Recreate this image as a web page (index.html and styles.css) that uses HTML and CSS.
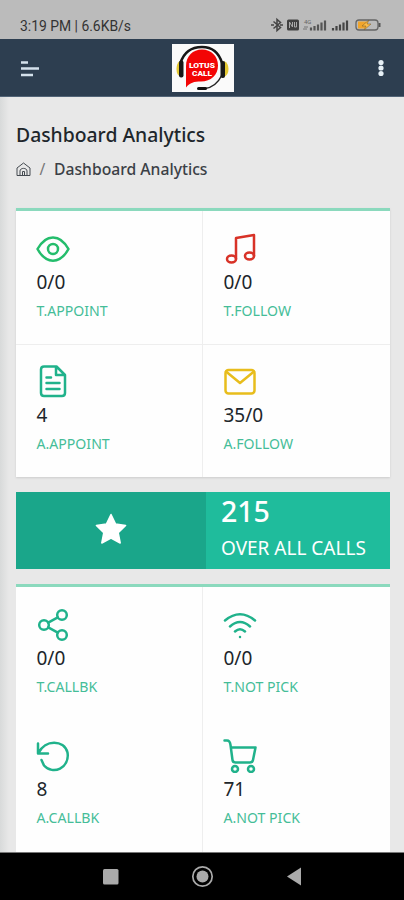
FILE: index.html
```html
<!DOCTYPE html>
<html lang="en">
<head>
<meta charset="utf-8">
<title>Dashboard Analytics</title>
<link rel="stylesheet" href="styles.css">
</head>
<body>
<div class="status">
  <span class="clock">3:19 PM | 6.6KB/s</span>
  <svg class="status-icons" width="112" height="16" viewBox="0 0 112 16">
    <g fill="none" stroke="#444" stroke-width="1.500"><path d="M3.500 4.500l7 6-3.500 3v-11l3.500 3-7 6"/><path d="M1 8h3M10 8h3"/></g>
    <rect x="17" y="2.500" width="12" height="11" rx="1.500" fill="#414141"/>
    <path d="M19.500 11V5l3 5V5m2 0v5h2V5" fill="none" stroke="#aaa" stroke-width="1"/>
    <text class="net" x="34" y="6.500">4G</text>
    <path d="M34 10h4M33 12h4" stroke="#777"/>
    <path d="M41 13.500v-3M44.500 13.500v-4.500M48 13.500v-6M51.500 13.500v-8M55 13.500v-10" stroke="#555" stroke-width="2.200"/>
    <path d="M63 13.500v-2.500M66.500 13.500v-4.500M70 13.500v-6M73.500 13.500v-8M77 13.500v-10" stroke="#444" stroke-width="2.200"/>
    <rect x="86" y="3" width="22" height="10" rx="3" fill="#bbb" stroke="#666" stroke-width="1.300"/>
    <path d="M88 4.500h10l-2 7h-8z" fill="#f1a52b"/><path d="M99 3l-7 6h4l-2 4 7-6h-4z" fill="#ffbd45" stroke="#775b2d" stroke-width=".5"/>
    <path d="M109.500 6v4" stroke="#555" stroke-width="2"/>
  </svg>
</div>
<header class="topbar">
  <svg width="20" height="20" viewBox="0 0 20 20"><path d="M1 4.500h7M1 10.500h18M1 17h12" stroke="#d4e1ec" stroke-width="2.600"/></svg>
  <svg class="logo" width="62" height="48" viewBox="0 0 62 48">
    <rect width="62" height="48" fill="#fafafa"/>
    <path d="M8.500 19C12 8 20 3 30 3S47 9 50 19" fill="none" stroke="#171717" stroke-width="2.600"/>
    <path d="M50 31C46 39 41 43.500 33 44.500" fill="none" stroke="#222" stroke-width="1.500"/>
    <path d="M8 17Q4.500 19 4.500 25T8 32z" fill="#e4c832"/><path d="M52 17q4.500 2 4.500 8T52 33z" fill="#e4c832"/>
    <rect x="7" y="16.500" width="4.500" height="17" rx="2" fill="#181818"/><rect x="48.500" y="17" width="4.500" height="17" rx="2" fill="#181818"/>
    <path d="M14 43.500V22C14 12 21 5.500 30 5.500S46 12 46 21.500 39 37.500 29 37.500c-7 0-11 1-15 6z" fill="#f30505"/>
    <rect x="25" y="43" width="10" height="3" rx="1.500" fill="#111"/>
    <text x="30" y="24" text-anchor="middle" textLength="26" lengthAdjust="spacingAndGlyphs">LOTUS</text><text x="30" y="32" text-anchor="middle" textLength="20" lengthAdjust="spacingAndGlyphs">CALL</text>
  </svg>
  <svg class="more" width="8" height="20" viewBox="0 0 8 20" fill="#e6f0f6"><circle cx="4" cy="4.500" r="2.600"/><circle cx="4" cy="10" r="2.600"/><circle cx="4" cy="15.500" r="2.600"/></svg>
</header>
<main class="page">
  <h1>Dashboard Analytics</h1>
  <nav class="crumbs">
    <svg width="15" height="15" viewBox="0 0 15 15" fill="none" stroke="#444a50" stroke-width="1"><path d="M1 6L7.500 1 14 6V13.500H1zM4 13.500V9C4 5.500 11 5.500 11 9V13.500M6.500 13.500V9.500h2V13.500"/></svg>
    <span class="slash">/</span><span>Dashboard Analytics</span>
  </nav>
  <section class="card first">
    <div class="stat">
      <svg class="icon green" viewBox="0 0 34 34"><path d="M1.500 17C10 1.500 24 1.500 32.500 17 24 32.500 10 32.500 1.500 17z"/><circle cx="17" cy="17" r="5"/></svg>
      <strong>0/0</strong><span>T.APPOINT</span>
    </div>
    <div class="stat">
      <svg class="icon red" viewBox="0 0 34 34"><path d="M13 27V6l18-3V24"/><ellipse cx="8.500" cy="27" rx="4.500" ry="3.500"/><ellipse cx="26.500" cy="24" rx="4.500" ry="3.500"/></svg>
      <strong>0/0</strong><span>T.FOLLOW</span>
    </div>
    <div class="stat">
      <svg class="icon" viewBox="0 0 34 34"><path d="M8 2.500h12.500L29 11v18q0 3-3 3H8q-3 0-3-3V5.500q0-3 3-3zM20 2.500V11h9M10.500 13.500H15M10.500 19h13M10.500 25h13"/></svg>
      <strong>4</strong><span>A.APPOINT</span>
    </div>
    <div class="stat">
      <svg class="icon yellow" viewBox="0 0 34 34"><rect x="2.500" y="6" width="29" height="23.500" rx="3"/><path d="M3 7.500L17 19 31 7.500"/></svg>
      <strong>35/0</strong><span>A.FOLLOW</span>
    </div>
  </section>
  <section class="total">
    <div class="star"><svg width="34" height="34" viewBox="0 0 34 34"><path d="M17 2.500l4.600 9.500 10 1.400-7.400 7.200 2 10.400L17 26l-9.200 5 2-10.400-7.400-7.200 10-1.400z" fill="#fff" stroke="#fff" stroke-width="1.500" stroke-linejoin="round"/></svg></div>
    <div class="sum"><b>215</b><span>OVER ALL CALLS</span></div>
  </section>
  <section class="card second">
    <div class="stat">
      <svg class="icon" viewBox="0 0 34 34"><circle cx="8" cy="17" r="4.800"/><circle cx="26" cy="7" r="4.800"/><circle cx="26" cy="27" r="4.800"/><path d="M12.200 14.700l9.600-5.400M12.200 19.300l9.600 5.400"/></svg>
      <strong>0/0</strong><span>T.CALLBK</span>
    </div>
    <div class="stat">
      <svg class="icon" viewBox="0 0 34 34"><path d="M2 12.500Q17 0 32 12.500M7 18.500q10-9 20 0M12 23.500q5-4.500 10 0M17 29v.1"/></svg>
      <strong>0/0</strong><span>T.NOT PICK</span>
    </div>
    <div class="stat">
      <svg class="icon" viewBox="0 0 34 34"><path d="M2 4.500v10h10M2.500 14C9 0 28 .5 31.500 13.500 34 29 17 36.500 8 26.500L5.500 21"/></svg>
      <strong>8</strong><span>A.CALLBK</span>
    </div>
    <div class="stat">
      <svg class="icon" viewBox="0 0 34 34"><path d="M1.500 1.500H4Q7 1.500 7.500 6L9.500 21q.3 2.500 3 2.500H27q2.500 0 3-2.500L32.500 8.500H8"/><circle cx="12" cy="30" r="3"/><circle cx="28" cy="30" r="3"/></svg>
      <strong>71</strong><span>A.NOT PICK</span>
    </div>
  </section>
</main>
<footer class="navbar">
  <svg width="404" height="48" viewBox="0 0 404 48"><rect x="103" y="16" width="15.500" height="15.500" rx="1.500" fill="#aaa"/><circle cx="202.500" cy="23.500" r="9.700" fill="none" stroke="#aaa" stroke-width="1.700"/><circle cx="202.500" cy="23.500" r="6" fill="#aaa"/><path d="M287 23.500l14-9v18z" fill="#aaa"/></svg>
</footer>
</body>
</html>
```
FILE: styles.css
```css
* { box-sizing: border-box; }
body { margin: 0; width: 404px; height: 900px; overflow: hidden; display: flex; flex-direction: column; background: #e8e8e8; font-family: "Noto Sans", sans-serif; color: #20262b; }
svg { display: block; flex: none; }
.status { height: 39px; flex: none; background: #bbb; display: flex; justify-content: space-between; padding: 16px 22px 0 20px; }
.clock { font: 13.9px/20px Roboto, sans-serif; color: #333; white-space: nowrap; }
.status-icons { margin-top: 1px; }
.net { font: 6px Roboto, sans-serif; fill: #666; }
.topbar { height: 58px; flex: none; background: #2d3e50; border-bottom: 1px solid #526477; display: grid; grid-template-columns: 1fr 62px 1fr; align-items: center; padding: 0 19px 0 20px; }
.logo text { font: 900 7.500px Roboto, sans-serif; fill: #fff; }
.more { justify-self: end; }
.page { height: 755px; flex: none; overflow: hidden; padding: 24px 14.500px 0 16px; background: linear-gradient(90deg, #d8dada, #e8e8e8 9px); }
h1 { margin: 0; font-size: 19.35px; line-height: 27px; font-weight: 500; white-space: nowrap; }
.crumbs { height: 20px; margin-top: 11px; display: flex; align-items: center; font-size: 15.700px; line-height: 20px; font-weight: 500; color: #3b4046; white-space: nowrap; }
.slash { width: 23px; text-align: center; color: #777; font-weight: 400; }
.card { display: grid; grid-template-columns: 187px 1fr; background: #fefefe; border-top: 3px solid #8bd9bd; }
.first { height: 269px; margin-top: 29px; grid-template-rows: 133px 133px; box-shadow: 0 1px 2px #ccc; }
.second { height: 275px; margin-top: 15px; grid-template-rows: 132px 140px; }
.stat { display: flex; flex-direction: column; align-items: flex-start; padding: 21px 0 0 20.500px; }
.stat:nth-child(odd) { border-right: 1px solid #eee; }
.first .stat:nth-child(n+3) { border-top: 1px solid #eee; padding-top: 19px; }
.second .stat:nth-child(n+3) { padding-top: 20px; }
.icon { width: 34px; height: 34px; margin-left: -.5px; fill: none; stroke: #20b28b; stroke-width: 2.500; stroke-linecap: round; stroke-linejoin: round; }
.green { stroke: #24bd6c; }
.red { stroke: #d83227; }
.yellow { stroke: #e8bd1c; }
.stat strong { font-size: 19px; line-height: 24px; font-weight: 400; margin-top: 4px; }
.first .stat:nth-child(n+3) strong { margin-top: 5px; }
.stat span { font-size: 14.1px; line-height: 20px; margin-top: 7px; color: #45bd98; white-space: nowrap; }
.total { height: 77px; margin-top: 15px; display: grid; grid-template-columns: 190px 1fr; background: #1fbc9c; color: #fff; }
.star { background: #1aa68a; display: grid; place-items: center; padding-bottom: 3px; }
.sum { padding-left: 15px; white-space: nowrap; }
.sum b { display: block; font-size: 28.500px; line-height: 38px; font-weight: 500; }
.sum span { display: block; font-size: 19px; line-height: 36px; }
.navbar { height: 48px; flex: none; background: #000; border-top: 1px solid #777; }
```
